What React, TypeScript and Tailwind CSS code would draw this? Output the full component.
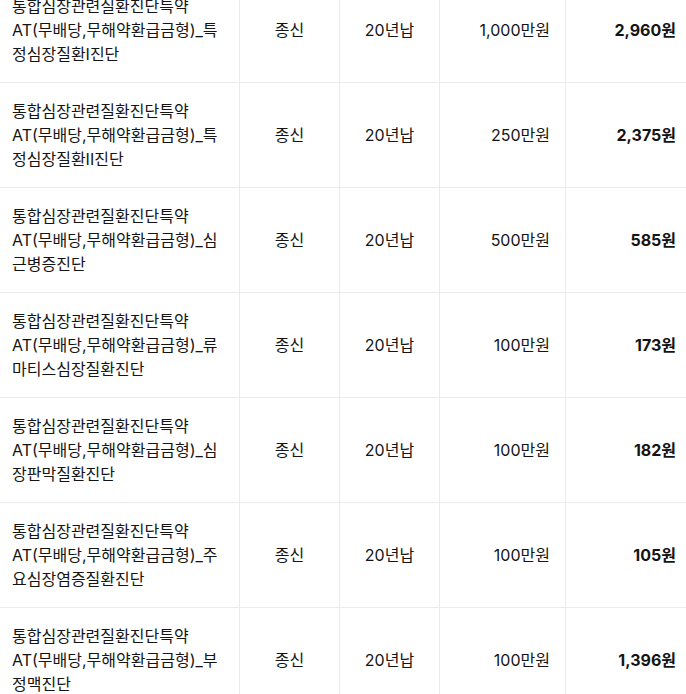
import React from "react";

type Row = { name: string; amount: string; premium: string };

const rows: Row[] = [
  { name: "특정심장질환I진단", amount: "1,000만원", premium: "2,960원" },
  { name: "특정심장질환II진단", amount: "250만원", premium: "2,375원" },
  { name: "심근병증진단", amount: "500만원", premium: "585원" },
  { name: "류마티스심장질환진단", amount: "100만원", premium: "173원" },
  { name: "심장판막질환진단", amount: "100만원", premium: "182원" },
  { name: "주요심장염증질환진단", amount: "100만원", premium: "105원" },
  { name: "부정맥진단", amount: "100만원", premium: "1,396원" },
];

const cell = "flex items-center border-r border-[#ebebeb]";

export default function App() {
  return (
    <div
      className="w-[686px] min-h-[694px] overflow-hidden bg-white text-[16px] leading-[24px] text-[#141414]"
      style={{ fontFamily: '"Inter", "Noto Sans CJK KR", sans-serif' }}
    >
      <div className="-mt-[22px]">
        {rows.map((r) => (
          <div
            key={r.name}
            className="grid grid-cols-[240px_100px_100px_126px_120px] border-b border-[#ebebeb]"
          >
            <div className={`${cell} py-4 pl-3 pr-[18px]`}>
              <p className="w-[209px]">
                통합심장관련질환진단특약AT(무배당,무해약환급금형)_{r.name}
              </p>
            </div>
            <div className={`${cell} justify-center`}>종신</div>
            <div className={`${cell} justify-center`}>20년납</div>
            <div className={`${cell} justify-end pr-[15px]`}>{r.amount}</div>
            <div className="flex items-center justify-end pr-[10px] font-bold">
              {r.premium}
            </div>
          </div>
        ))}
      </div>
    </div>
  );
}
